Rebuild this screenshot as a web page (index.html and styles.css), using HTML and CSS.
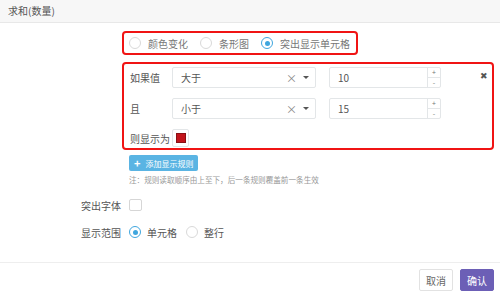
FILE: index.html
```html
<!DOCTYPE html>
<html lang="zh">
<head>
<meta charset="utf-8">
<link rel="stylesheet" href="styles.css">
</head>
<body>
<div class="dialog">
  <div class="header">求和(数量)</div>
  <div class="content">
    <div class="opt-box">
      <label class="radio"><span class="dot"></span>颜色变化</label>
      <label class="radio"><span class="dot"></span>条形图</label>
      <label class="radio"><span class="dot on"></span>突出显示单元格</label>
    </div>
    <div class="rule-box">
      <div class="rule-row">
        <span class="rlabel">如果值</span>
        <div class="select"><span class="sval">大于</span><span class="clear">×</span><span class="caret"></span></div>
        <div class="num"><span class="nval">10</span><div class="steps"><span>+</span><span>-</span></div></div>
        <span class="close">✖</span>
      </div>
      <div class="rule-row">
        <span class="rlabel">且</span>
        <div class="select"><span class="sval">小于</span><span class="clear">×</span><span class="caret"></span></div>
        <div class="num"><span class="nval">15</span><div class="steps"><span>+</span><span>-</span></div></div>
      </div>
      <div class="rule-row last">
        <span class="rlabel">则显示为</span>
        <div class="swatch"><span></span></div>
      </div>
    </div>
    <div class="add-btn"><span class="plus">+</span>添加显示规则</div>
    <div class="note">注：规则读取顺序由上至下，后一条规则覆盖前一条生效</div>
    <div class="frow first">
      <span class="flabel">突出字体</span>
      <span class="check"></span>
    </div>
    <div class="frow">
      <span class="flabel">显示范围</span>
      <label class="radio"><span class="dot on"></span>单元格</label>
      <label class="radio"><span class="dot"></span>整行</label>
    </div>
  </div>
  <div class="footer">
    <button class="btn cancel">取消</button>
    <button class="btn ok">确认</button>
  </div>
</div>
</body>
</html>
```
FILE: styles.css
```css
* { box-sizing: border-box; }
html, body { margin: 0; padding: 0; background: #fff; }
body {
  width: 500px; height: 295px; overflow: hidden;
  font-family: "Noto Sans CJK SC", "Noto Sans", sans-serif;
  font-size: 10px; color: #555;
}
.dialog { display: flex; flex-direction: column; height: 295px; }
.header {
  height: 23px; line-height: 22px; padding-left: 8px;
  background: #f7f7f7; border-bottom: 1px solid #e8e8e8; color: #555;
}
.content { height: 239px; display: flex; flex-direction: column; }
.opt-box {
  margin: 8px 0 0 122px; width: 236px; height: 24px;
  border: 2px solid #f01414; border-radius: 4px;
  display: flex; align-items: center; padding-left: 5px;
}
.radio {
  display: flex; align-items: center; color: #777; margin-right: 12px;
  white-space: nowrap; flex-shrink: 0;
}
.dot {
  width: 12px; height: 12px; border-radius: 50%; border: 1px solid #d9d9d9;
  background: #fff; margin-right: 7px; position: relative; flex-shrink: 0;
}
.dot.on { border-color: #3fa6de; }
.dot.on::after {
  content: ""; position: absolute; left: 2.5px; top: 2.5px;
  width: 5px; height: 5px; border-radius: 50%; background: #3fa6de;
}
.rule-box {
  margin: 7px 0 0 122px; width: 372px; height: 88px;
  border: 2px solid #f01414; border-radius: 4px;
  padding: 3px 0 0 6px; display: flex; flex-direction: column; gap: 10px;
}
.rule-row { display: flex; align-items: center; height: 21px; }
.rule-row.last { height: 18px; }
.rlabel { width: 42px; color: #555; white-space: nowrap; }
.select {
  width: 144px; height: 21px; border: 1px solid #e3e6e8; border-radius: 2px;
  display: flex; align-items: center; padding: 0 6px 0 8px;
}
.sval { flex: 1; color: #555; }
.clear { color: #888; font-size: 11px; margin-right: 6px; }
.caret {
  width: 0; height: 0; border-left: 3px solid transparent; border-right: 3px solid transparent;
  border-top: 3px solid #555;
}
.num {
  width: 112px; height: 21px; margin-left: 13px; border: 1px solid #e3e6e8; border-radius: 2px;
  display: flex; align-items: center;
}
.nval { flex: 1; padding-left: 8px; color: #555; }
.steps {
  width: 13px; height: 100%; border-left: 1px solid #e3e6e8; display: flex; flex-direction: column;
}
.steps span {
  flex: 1; display: flex; align-items: center; justify-content: center;
  font-size: 7px; line-height: 7px; color: #777; overflow: hidden;
}
.steps span + span { border-top: 1px solid #e3e6e8; }
.close { margin-left: 39px; font-size: 9px; color: #555; margin-top: -4px; }
.swatch {
  width: 17px; height: 18px; border: 1px solid #e3e6e8; border-radius: 2px;
  display: flex; align-items: center; justify-content: center;
}
.swatch span { width: 10px; height: 10px; background: #c2141b; border: 1px solid #8a1015; }
.add-btn {
  margin: 5px 0 0 129px; width: 69px; height: 16px; background: #5ab4e3; border-radius: 2px;
  color: #fff; font-size: 8px; display: flex; align-items: center; padding-left: 5px;
  white-space: nowrap;
}
.plus { font-weight: bold; font-size: 11px; margin-right: 5px; line-height: 1; }
.note { margin: 2px 0 0 129px; font-size: 7.6px; color: #999; line-height: 14px; white-space: nowrap; }
.frow { display: flex; align-items: center; height: 14px; margin-left: 81px; }
.frow.first { margin-top: 11px; }
.frow + .frow { margin-top: 13px; }
.flabel { width: 48px; color: #555; white-space: nowrap; }
.check { width: 13px; height: 12px; border: 1px solid #d6d6d6; border-radius: 2px; }
.frow .radio { margin-right: 9px; color: #555; }
.frow .dot { margin-right: 6px; }
.footer {
  flex: 1; border-top: 1px solid #eee; display: flex; justify-content: flex-end;
  align-items: flex-start; padding: 6px 6px 0 0; gap: 7px;
}
.btn {
  font-family: inherit; font-size: 10px; height: 22px; width: 34px; padding: 0;
  border-radius: 2px; border: 1px solid #e2e2e2; background: #fff; color: #666;
}
.btn.ok { background: #6c5fb6; border-color: #6c5fb6; color: #fff; }
```
